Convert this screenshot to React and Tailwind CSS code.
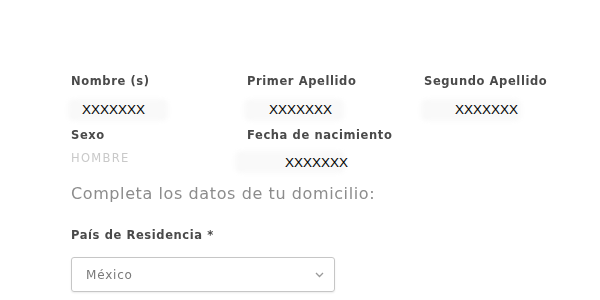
import React from 'react';

const label = "text-[11.5px] font-bold text-[#4a4a4a] leading-[14px] tracking-[0.6px] blur-[0.4px]";
const mark = "font-['Liberation_Sans',Arial,sans-serif] text-[13.5px] text-black leading-[16px]";

function Field({ title, value, pad }) {
    return (
        <div>
            <div className={label}>{title}</div>
            <div className="relative mt-[11px] h-[22px] w-[100px] -ml-[3px]">
                {/* faint input background */}
                <div className="absolute inset-0 rounded-md bg-[#f9f9f9] blur-[2px]"></div>
                <div className={`relative ${mark} pt-[3px]`} style={{ paddingLeft: pad }}>{value}</div>
            </div>
        </div>
    );
}

export default function App() {
    return (
        <div className="w-[600px] h-[300px] bg-white overflow-hidden font-['DejaVu_Sans',Verdana,sans-serif] pl-[71px] pt-[74px]">
            <div className="grid grid-cols-[176px_177px_1fr]">
                <Field title="Nombre (s)" value="XXXXXXX" pad={14} />
                <Field title="Primer Apellido" value="XXXXXXX" pad={25} />
                <Field title="Segundo Apellido" value="XXXXXXX" pad={34} />
            </div>

            <div className="grid grid-cols-[176px_177px_1fr] mt-[7px]">
                <div>
                    <div className={label}>Sexo</div>
                    <div className="mt-[9px] text-[11.5px] tracking-[1.3px] text-[#c9c9c9] leading-[14px] blur-[0.4px]">HOMBRE</div>
                </div>
                <div>
                    <div className={label}>Fecha de nacimiento</div>
                    <div className="relative mt-[9px] h-[22px] w-[110px] -ml-[12px]">
                        <div className="absolute inset-0 rounded-md bg-[#f9f9f9] blur-[2px]"></div>
                        <div className={`relative ${mark} pt-[4px] pl-[50px]`}>XXXXXXX</div>
                    </div>
                </div>
                <div></div>
            </div>

            <div className="mt-[11px] text-[16px] tracking-[0.6px] text-[#8c8c8c] leading-[20px] blur-[0.4px]">
                Completa los datos de tu domicilio:
            </div>

            <div className={`${label} mt-[24px]`}>País de Residencia *</div>

            <div className="mt-[15px] w-[264px] h-[35px] border border-[#c6c6c6] rounded-[3px] shadow-[0_1px_2px_rgba(0,0,0,0.08)] flex items-center justify-between pl-[14px] pr-[10px] blur-[0.4px]">
                <span className="text-[12px] tracking-[0.8px] text-[#7a7a7a]">México</span>
                <svg width="9" height="6" viewBox="0 0 9 6" fill="none">
                    <path d="M1 1l3.5 3.5L8 1" stroke="#9a9a9a" strokeWidth="1.3" />
                </svg>
            </div>
        </div>
    );
}
